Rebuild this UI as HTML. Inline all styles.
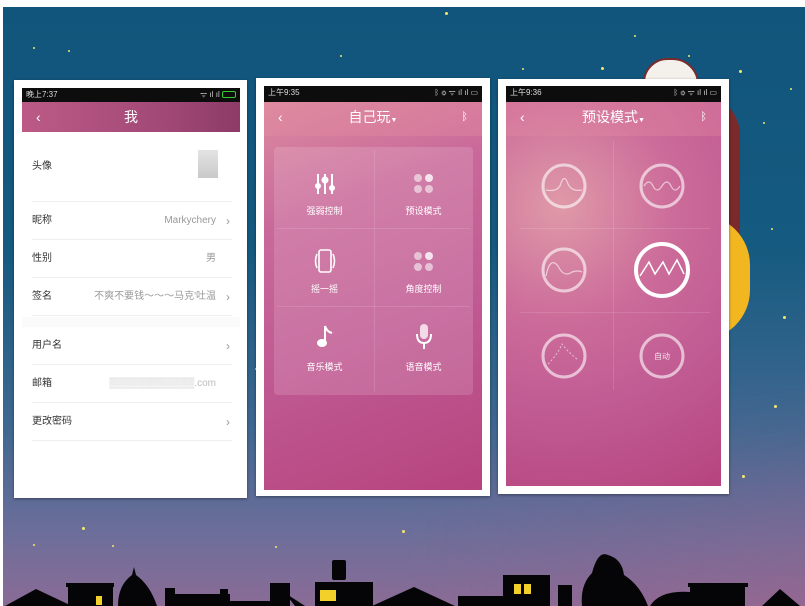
<!DOCTYPE html>
<html><head><meta charset="utf-8"><style>
*{margin:0;padding:0;box-sizing:border-box}
body{width:805px;height:606px;overflow:hidden;background:#fff;font-family:"Liberation Sans","Noto Sans CJK SC",sans-serif;position:relative}
.bg{position:absolute;left:3px;top:7px;width:802px;height:599px;background:linear-gradient(180deg,#11557c 0%,#155a80 40%,#3f6891 70%,#6d6e9a 88%,#8a6c96 100%)}
.bg2{position:absolute;left:3px;top:7px;width:802px;height:599px;background:linear-gradient(90deg,rgba(0,0,0,0) 50%,rgba(180,90,130,.25) 100%);-webkit-mask:linear-gradient(180deg,transparent 60%,#000 100%);mask:linear-gradient(180deg,transparent 60%,#000 100%)}
.abs{position:absolute}
.star{position:absolute;width:3px;height:3px;border-radius:50%;background:#f3e86a}
.sb{position:absolute;background:#0d0d0d;color:#ddd;font-size:8px;line-height:14px;padding-left:4px}
.hd{position:absolute;color:#fff;font-size:14px;text-align:center;line-height:30px}
.row{position:absolute;left:32px;width:200px;font-size:10px;color:#333;border-bottom:1px solid #eee}
.row .v{position:absolute;right:16px;color:#999}
.row .ar{position:absolute;right:2px;color:#999;font-size:12px}
.cell{position:absolute;width:99px;height:78px;color:#fff;font-size:9px;text-align:center}
.cell .lb{position:absolute;left:0;right:0;top:52px}
.dots{position:absolute;left:40px;top:22px;width:20px;height:20px}
.dots i{position:absolute;width:8px;height:8px;border-radius:50%;background:rgba(255,255,255,.55)}
</style></head><body>
<div class="bg"></div>
<div class="bg2"></div>
<div class="star" style="left:445px;top:12px"></div>
<div class="star" style="left:33px;top:47px;width:2px;height:2px"></div>
<div class="star" style="left:68px;top:50px;width:2px;height:2px"></div>
<div class="star" style="left:340px;top:55px;width:2px;height:2px"></div>
<div class="star" style="left:294px;top:110px"></div>
<div class="star" style="left:522px;top:68px;width:2px;height:2px"></div>
<div class="star" style="left:601px;top:67px"></div>
<div class="star" style="left:634px;top:35px;width:2px;height:2px"></div>
<div class="star" style="left:688px;top:55px;width:2px;height:2px"></div>
<div class="star" style="left:739px;top:70px"></div>
<div class="star" style="left:790px;top:88px;width:2px;height:2px"></div>
<div class="star" style="left:763px;top:122px;width:2px;height:2px"></div>
<div class="star" style="left:771px;top:228px;width:2px;height:2px"></div>
<div class="star" style="left:783px;top:316px"></div>
<div class="star" style="left:774px;top:405px"></div>
<div class="star" style="left:742px;top:475px"></div>
<div class="star" style="left:402px;top:530px"></div>
<div class="star" style="left:82px;top:527px"></div>
<div class="star" style="left:33px;top:544px;width:2px;height:2px"></div>
<div class="star" style="left:275px;top:546px;width:2px;height:2px"></div>
<div class="star" style="left:112px;top:545px;width:2px;height:2px"></div>
<div class="star" style="left:255px;top:368px;width:2px;height:2px"></div>
<!-- character / moon -->
<div class="abs" style="left:643px;top:58px;width:56px;height:36px;border-radius:26px 28px 10px 10px;background:#f4f0ec;border:2px solid #7a2a2a"></div>
<div class="abs" style="left:690px;top:95px;width:50px;height:245px;border-radius:0 40px 40px 0;background:#7a2a2a"></div>
<div class="abs" style="left:700px;top:215px;width:50px;height:125px;border-radius:0 60px 60px 0;background:#f2b621"></div>

<!-- panel 1 -->
<div class="abs" style="left:14px;top:80px;width:233px;height:418px;background:#fff;box-shadow:0 1px 3px rgba(0,0,0,.4)"></div>
<div class="sb" style="left:22px;top:88px;width:218px">晚上7:37<span style="position:absolute;right:4px;color:#ccc">ᯤ ıl ıl <span style="display:inline-block;width:14px;height:7px;border:1px solid #3c3;border-radius:2px;vertical-align:-1px"></span></span></div>
<div class="hd" style="left:22px;top:102px;width:218px;background:linear-gradient(90deg,#bc5a86,#a44a78 60%,#8d3b68)"><span style="position:absolute;left:14px;font-size:14px">‹</span>我</div>
<div class="row" style="top:132px;height:70px;line-height:70px">头像<div class="abs" style="right:14px;top:18px;width:20px;height:28px;background:linear-gradient(180deg,#ddd,#bbb);opacity:.8"></div></div>
<div class="row" style="top:202px;height:38px;line-height:38px">昵称<span class="v">Markychery</span><span class="ar">›</span></div>
<div class="row" style="top:240px;height:38px;line-height:38px">性别<span class="v">男</span></div>
<div class="row" style="top:278px;height:38px;line-height:38px">签名<span class="v">不爽不要钱～～～马克'吐温</span><span class="ar">›</span></div>
<div class="abs" style="left:22px;top:317px;width:218px;height:10px;background:#fafafa"></div>
<div class="row" style="top:327px;height:38px;line-height:38px">用户名<span class="ar">›</span></div>
<div class="row" style="top:365px;height:38px;line-height:38px">邮箱<span class="v" style="color:#bbb">▒▒▒▒▒▒▒▒▒▒▒▒.com</span></div>
<div class="row" style="top:403px;height:38px;line-height:38px">更改密码<span class="ar">›</span></div>

<!-- panel 2 -->
<div class="abs" style="left:256px;top:78px;width:234px;height:418px;background:#fff;box-shadow:0 1px 3px rgba(0,0,0,.4)"></div>
<div class="abs" style="left:264px;top:86px;width:218px;height:404px;background:linear-gradient(160deg,#de8ea0 0%,#c9699a 30%,#c05a93 60%,#b6447e 100%)"></div>
<div class="sb" style="left:264px;top:86px;width:218px;height:16px">上午9:35<span style="position:absolute;right:4px;color:#ccc">ᛒ ⚙ ᯤ ıl ıl ▭</span></div>
<div class="hd" style="left:264px;top:102px;width:218px;background:rgba(230,140,160,.35)"><span style="position:absolute;left:14px">‹</span>自己玩<span style="font-size:7px">▼</span><span style="position:absolute;right:14px;font-size:11px">ᛒ</span></div>
<div class="abs" style="left:274px;top:147px;width:199px;height:248px;background:rgba(255,255,255,.14);border-radius:4px"></div>
<div class="abs" style="left:374px;top:150px;width:1px;height:242px;background:rgba(255,255,255,.12)"></div>
<div class="abs" style="left:277px;top:228px;width:193px;height:1px;background:rgba(255,255,255,.12)"></div>
<div class="abs" style="left:277px;top:306px;width:193px;height:1px;background:rgba(255,255,255,.12)"></div>
<div class="cell" style="left:275px;top:152px"><svg class="abs" style="left:39px;top:20px" width="22" height="24" stroke="#fff" stroke-width="2" fill="#fff"><line x1="4" y1="2" x2="4" y2="22"/><line x1="11" y1="2" x2="11" y2="22"/><line x1="18" y1="2" x2="18" y2="22"/><circle cx="4" cy="14" r="2"/><circle cx="11" cy="8" r="2.5"/><circle cx="18" cy="16" r="2"/></svg><div class="lb">强弱控制</div></div>
<div class="cell" style="left:374px;top:152px"><div class="dots"><i style="left:0;top:0"></i><i style="left:11px;top:0;background:rgba(255,255,255,.8)"></i><i style="left:0;top:11px"></i><i style="left:11px;top:11px"></i></div><div class="lb">预设模式</div></div>
<div class="cell" style="left:275px;top:230px"><svg class="abs" style="left:38px;top:18px" width="24" height="26" fill="none" stroke="#fff" stroke-width="1.6"><rect x="6" y="2" width="12" height="22" rx="2"/><path d="M4 6 Q1 13 4 20 M20 6 Q23 13 20 20"/></svg><div class="lb">摇一摇</div></div>
<div class="cell" style="left:374px;top:230px"><div class="dots"><i style="left:0;top:0"></i><i style="left:11px;top:0;background:rgba(255,255,255,.8)"></i><i style="left:0;top:11px"></i><i style="left:11px;top:11px"></i></div><div class="lb">角度控制</div></div>
<div class="cell" style="left:275px;top:308px"><svg class="abs" style="left:40px;top:16px" width="20" height="26"><path d="M10 2 V18" stroke="#fff" stroke-width="2"/><ellipse cx="7" cy="19" rx="5" ry="4" fill="#fff"/><path d="M10 2 Q12 8 17 9" stroke="#fff" stroke-width="2" fill="none"/></svg><div class="lb">音乐模式</div></div>
<div class="cell" style="left:374px;top:308px"><svg class="abs" style="left:40px;top:14px" width="20" height="30" fill="none" stroke="#fff" stroke-width="2"><rect x="6" y="2" width="8" height="15" rx="4" fill="rgba(255,255,255,.75)" stroke="none"/><path d="M3 12 Q3 21 10 21 Q17 21 17 12 M10 21 V27"/></svg><div class="lb">语音模式</div></div>

<!-- panel 3 -->
<div class="abs" style="left:498px;top:79px;width:231px;height:415px;background:#fff;box-shadow:0 1px 3px rgba(0,0,0,.4)"></div>
<div class="abs" style="left:506px;top:86px;width:215px;height:400px;background:radial-gradient(circle at 25% 30%,#df9aa8 0%,#cc6c9a 35%,#c05a93 65%,#b6447e 100%)"></div>
<div class="sb" style="left:506px;top:86px;width:215px;height:16px">上午9:36<span style="position:absolute;right:4px;color:#ccc">ᛒ ⚙ ᯤ ıl ıl ▭</span></div>
<div class="hd" style="left:506px;top:102px;width:215px;background:rgba(230,140,160,.35)"><span style="position:absolute;left:14px">‹</span>预设模式<span style="font-size:7px">▼</span><span style="position:absolute;right:14px;font-size:11px">ᛒ</span></div>
<div class="abs" style="left:613px;top:140px;width:1px;height:250px;background:rgba(255,255,255,.12)"></div>
<div class="abs" style="left:520px;top:228px;width:190px;height:1px;background:rgba(255,255,255,.12)"></div>
<div class="abs" style="left:520px;top:312px;width:190px;height:1px;background:rgba(255,255,255,.12)"></div>
<svg class="abs" style="left:506px;top:86px" width="215" height="400" fill="none" stroke="rgba(255,255,255,.6)" stroke-width="3">
<circle cx="58" cy="100" r="21"/><path d="M40 104 Q50 106 54 100 Q58 86 62 98 Q66 106 76 104" stroke-width="1.2"/>
<circle cx="156" cy="100" r="21"/><path d="M138 100 Q143 92 147 100 Q151 108 156 100 Q161 92 165 100 Q169 108 174 100" stroke-width="1.2"/>
<circle cx="58" cy="184" r="21"/><path d="M40 190 Q44 170 52 180 Q58 192 66 186 Q72 184 76 186" stroke-width="1.2"/>
<circle cx="156" cy="184" r="26" stroke="#fff" stroke-width="4"/><path d="M134 190 L143 176 L149 188 L157 176 L163 188 L171 174 L178 188" stroke="#fff" stroke-width="1.5"/>
<circle cx="58" cy="270" r="21"/><path d="M42 278 Q52 268 56 258 Q62 266 72 274" stroke-width="1" stroke-dasharray="2 2"/>
<circle cx="156" cy="270" r="21"/>
<text x="156" y="273" fill="rgba(255,255,255,.8)" stroke="none" font-size="8" text-anchor="middle" font-family="Noto Sans CJK SC">自动</text>
</svg>

<!-- skyline -->
<svg class="abs" style="left:0;top:545px" width="805" height="61" fill="#050508">
<path d="M5 61 L36 44 L72 61Z"/>
<rect x="68" y="39" width="45" height="22"/><rect x="66" y="38" width="48" height="4"/>
<path d="M118 61 Q118 40 132 30 L134 22 L136 30 Q150 40 157 61Z"/>
<rect x="165" y="49" width="65" height="12"/><rect x="165" y="43" width="10" height="18"/><rect x="220" y="44" width="8" height="17"/>
<rect x="230" y="56" width="40" height="5"/>
<rect x="270" y="38" width="20" height="23"/><path d="M285 48 L305 61 L295 61Z"/>
<rect x="315" y="37" width="58" height="24"/><rect x="332" y="15" width="14" height="20" rx="2"/>
<path d="M372 61 L414 42 L455 61Z"/>
<rect x="458" y="51" width="48" height="10"/><rect x="503" y="30" width="47" height="31"/>
<rect x="558" y="40" width="14" height="21"/><path d="M582 61 Q580 40 592 28 Q598 5 608 10 Q622 14 624 30 Q640 40 648 61Z"/>
<path d="M650 61 Q660 45 690 47 L690 61Z"/>
<rect x="690" y="40" width="55" height="21"/><rect x="688" y="38" width="60" height="4"/>
<path d="M762 61 L780 44 L800 61Z"/>
<rect x="96" y="51" width="6" height="9" fill="#f3d02a"/>
<rect x="320" y="45" width="16" height="11" fill="#f3d02a"/>
<rect x="514" y="39" width="7" height="10" fill="#f3d02a"/><rect x="524" y="39" width="7" height="10" fill="#f3d02a"/>
</svg>
</body></html>
